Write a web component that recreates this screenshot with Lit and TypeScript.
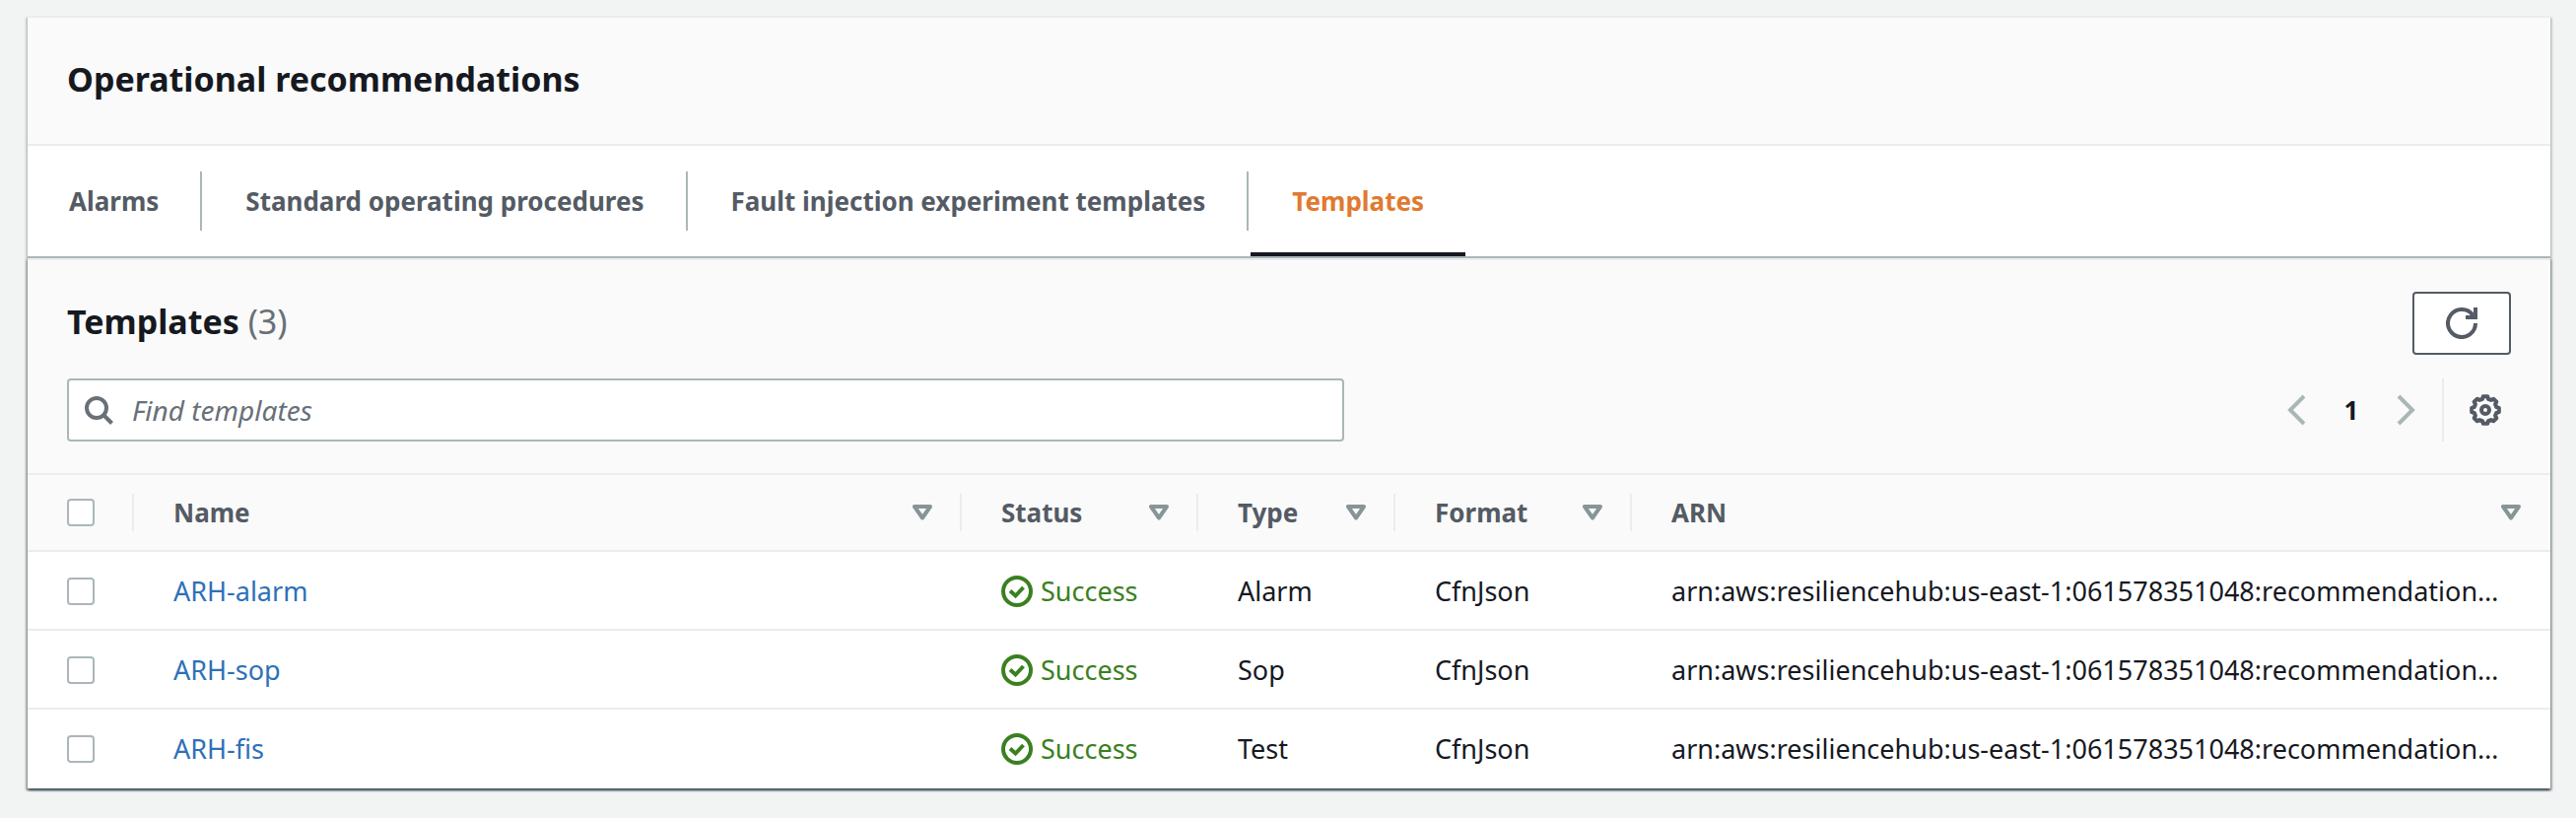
import { LitElement, html, css, svg, nothing } from "lit";
import { customElement, state } from "lit/decorators.js";
import { classMap } from "lit/directives/class-map.js";

interface Template {
  name: string;
  status: string;
  type: string;
  format: string;
  arn: string;
}

const ARN = "arn:aws:resiliencehub:us-east-1:061578351048:recommendation…";

const TEMPLATES: Template[] = [
  { name: "ARH-alarm", status: "Success", type: "Alarm", format: "CfnJson", arn: ARN },
  { name: "ARH-sop", status: "Success", type: "Sop", format: "CfnJson", arn: ARN },
  { name: "ARH-fis", status: "Success", type: "Test", format: "CfnJson", arn: ARN },
];

const TABS = ["Alarms", "Standard operating procedures", "Fault injection experiment templates", "Templates"];

const COLUMNS = [
  { label: "Name", width: "name" },
  { label: "Status", width: "status" },
  { label: "Type", width: "type" },
  { label: "Format", width: "format" },
  { label: "ARN", width: "arn" },
];

// Outline of an eight-toothed gear centred in a 32 unit box.
const gearPath = (() => {
  const at = (deg: number, r: number) => {
    const a = (deg * Math.PI) / 180;
    return `${(16 + r * Math.cos(a)).toFixed(2)} ${(16 + r * Math.sin(a)).toFixed(2)}`;
  };
  const points: string[] = [];
  for (let i = 0; i < 8; i++) {
    const a = i * 45;
    points.push(at(a - 9, 14), at(a + 9, 14), at(a + 15, 11.6), at(a + 30, 11.6));
  }
  return `M${points.join("L")}Z`;
})();

const icon = (w: number, h: number, body: unknown) =>
  html`<svg class="icon" width=${w} height=${h} viewBox="0 0 ${w} ${h}" fill="none" stroke="currentColor" stroke-width="4" aria-hidden="true">${body}</svg>`;

const searchIcon = icon(32, 32, svg`<circle cx="14" cy="14" r="10"/><path d="M21 21l8.5 8.5"/>`);
const refreshIcon = icon(32, 32, svg`<path d="M30 16A14 14 0 1 1 27.5 8"/><path d="M30 0v10H20"/>`);
const gearIcon = icon(32, 32, svg`<path d=${gearPath} stroke-linejoin="round"/><circle cx="16" cy="16" r="4"/>`);
const prevIcon = icon(20, 32, svg`<path d="M18 2L4 16l14 14"/>`);
const nextIcon = icon(20, 32, svg`<path d="M2 2l14 14L2 30"/>`);
const sortIcon = icon(20, 16, svg`<path d="M2 2h16l-8 11.5z" stroke-linejoin="round"/>`);
const successIcon = icon(32, 32, svg`<circle cx="16" cy="16" r="14"/><path d="M9 15.5l5.5 5L22.5 12"/>`);

@customElement("app-root")
export class AppRoot extends LitElement {
  static styles = css`
    :host {
      display: block;
      box-sizing: border-box;
      min-height: 100vh;
      padding: 16px 26px 28px 28px;
      background: #f2f3f3;
      color: #16191f;
      font-family: "Noto Sans", "Open Sans", sans-serif;
      font-size: 27px;
      line-height: 44px;
    }
    *, *::before, *::after { box-sizing: border-box; }
    button, input { font: inherit; color: inherit; margin: 0; }
    button { padding: 0; border: 0; background: none; cursor: pointer; }
    .icon { display: block; flex: none; }
    .container {
      background: #fff;
      border-top: 2px solid #eaeded;
      box-shadow: 0 2px 2px 0 rgba(0, 28, 36, 0.3), 2px 2px 2px 0 rgba(0, 28, 36, 0.15), -2px 2px 2px 0 rgba(0, 28, 36, 0.15);
    }
    .header { padding: 40px 40px 44px; background: #fafafa; border-bottom: 2px solid #eaeded; }
    h1, h2 { margin: 0; font-size: 34px; font-weight: 700; }
    h2 { padding-bottom: 4px; }
    .count { font-weight: 400; color: #687078; }
    .tabs { display: flex; gap: 2px; border-bottom: 2px solid #aab7b8; }
    .tab-item { display: flex; align-items: center; }
    .tab-item:not(:last-child)::after { content: ""; width: 2px; height: 60px; background: #aab7b8; }
    .tab {
      height: 112px;
      padding: 0 42px;
      border-top: 4px solid transparent;
      border-bottom: 4px solid transparent;
      font-size: 26px;
      font-weight: 700;
      color: #545b64;
    }
    .tab.active { color: #e07a30; border-bottom-color: #16191f; }
    .table-tools { display: grid; gap: 24px; padding: 32px 40px; background: #fafafa; }
    .tool-row { display: flex; align-items: center; justify-content: space-between; gap: 40px; }
    .refresh {
      display: grid;
      place-items: center;
      width: 100px;
      height: 64px;
      border: 2px solid #545b64;
      border-radius: 4px;
      background: #fff;
      color: #545b64;
    }
    .search {
      display: flex;
      flex: 0 1 1296px;
      align-items: center;
      gap: 18px;
      min-width: 0;
      height: 64px;
      padding: 0 14px;
      border: 2px solid #aab7b8;
      border-radius: 4px;
      background: #fff;
      color: #687078;
    }
    .search-input { flex: 1; min-width: 0; padding: 0; border: 0; outline: 0; background: none; color: #16191f; font-size: 28px; }
    .search-input::placeholder { color: #687078; font-style: italic; opacity: 1; }
    .paging { display: flex; align-items: center; height: 64px; }
    .arrow { color: #aab7b8; }
    .page { width: 92px; font-size: 26px; font-weight: 700; text-align: center; }
    .settings {
      height: 64px;
      margin-left: 26px;
      padding: 0 10px 0 26px;
      border-left: 2px solid #eaeded;
      color: #545b64;
    }
    table { width: 100%; table-layout: fixed; border-collapse: separate; border-spacing: 0; border-top: 2px solid #eaeded; }
    .col-select { width: 108px; }
    .col-name { width: 840px; }
    .col-status, .col-format { width: 240px; }
    .col-type { width: 200px; }
    th { height: 78px; padding: 0; background: #fafafa; border-bottom: 2px solid #eaeded; font-weight: 400; }
    .head { display: flex; align-items: center; padding-left: 40px; }
    .head::after { content: ""; width: 2px; height: 38px; background: #eaeded; }
    .head.last::after { background: none; }
    .head.select { justify-content: space-between; }
    .sort {
      display: flex;
      flex: 1;
      align-items: center;
      justify-content: space-between;
      padding-right: 28px;
      font-size: 26px;
      font-weight: 700;
      color: #545b64;
    }
    .sort .icon { color: #879596; }
    td { height: 80px; padding: 0 40px; overflow: hidden; white-space: nowrap; text-overflow: ellipsis; }
    tbody tr:not(:last-child) td { box-shadow: inset 0 -2px #eaeded; }
    .check {
      display: block;
      appearance: none;
      width: 28px;
      height: 28px;
      border: 2px solid #aab7b8;
      border-radius: 4px;
      background: #fff;
    }
    .check:checked { background: #0073bb; border-color: #0073bb; }
    .name { color: #2e70b8; text-decoration: none; }
    .status { display: flex; align-items: center; gap: 8px; color: #3a8020; }
  `;

  @state() private tab = "Templates";
  @state() private query = "";
  @state() private selected = new Set<string>();

  private toggle(name: string) {
    const next = new Set(this.selected);
    next.has(name) ? next.delete(name) : next.add(name);
    this.selected = next;
  }

  private toggleAll() {
    this.selected = this.selected.size === TEMPLATES.length ? new Set() : new Set(TEMPLATES.map((t) => t.name));
  }

  private renderTabs() {
    return html`<div class="tabs" role="tablist">
      ${TABS.map((t) => html`<div class="tab-item" role="presentation">
        <button class=${classMap({ tab: true, active: t === this.tab })} role="tab"
          aria-selected=${t === this.tab ? "true" : "false"} @click=${() => (this.tab = t)}>${t}</button>
      </div>`)}
    </div>`;
  }

  private renderRow(t: Template) {
    return html`<tr>
      <td><input class="check" type="checkbox" aria-label="Select ${t.name}"
        .checked=${this.selected.has(t.name)} @change=${() => this.toggle(t.name)}></td>
      <td><a class="name" href="#${t.name}">${t.name}</a></td>
      <td><span class="status">${successIcon}${t.status}</span></td>
      <td>${t.type}</td>
      <td>${t.format}</td>
      <td>${t.arn}</td>
    </tr>`;
  }

  private renderTable() {
    const rows = TEMPLATES.filter((t) => t.name.toLowerCase().includes(this.query.toLowerCase()));
    return html`<section class="container" aria-labelledby="templates-title">
      <div class="table-tools">
        <div class="tool-row">
          <h2 id="templates-title">Templates <span class="count">(${TEMPLATES.length})</span></h2>
          <button class="refresh" aria-label="Refresh">${refreshIcon}</button>
        </div>
        <div class="tool-row">
          <label class="search">${searchIcon}
            <input class="search-input" type="text" placeholder="Find templates" aria-label="Find templates"
              @input=${(e: Event) => (this.query = (e.target as HTMLInputElement).value)}>
          </label>
          <div class="paging">
            <button class="arrow" aria-label="Previous page">${prevIcon}</button>
            <button class="page" aria-current="page">1</button>
            <button class="arrow" aria-label="Next page">${nextIcon}</button>
            <button class="settings" aria-label="Preferences">${gearIcon}</button>
          </div>
        </div>
      </div>
      <table>
        <colgroup>
          <col class="col-select">
          ${COLUMNS.map((c) => html`<col class="col-${c.width}">`)}
        </colgroup>
        <thead>
          <tr>
            <th scope="col"><div class="head select">
              <input class="check" type="checkbox" aria-label="Select all templates"
                .checked=${this.selected.size === TEMPLATES.length} @change=${this.toggleAll}>
            </div></th>
            ${COLUMNS.map((c, i) => html`<th scope="col">
              <div class=${classMap({ head: true, last: i === COLUMNS.length - 1 })}>
                <button class="sort">${c.label}${sortIcon}</button>
              </div>
            </th>`)}
          </tr>
        </thead>
        <tbody>${rows.map((t) => this.renderRow(t))}</tbody>
      </table>
    </section>`;
  }

  render() {
    return html`<main class="container">
      <div class="header"><h1>Operational recommendations</h1></div>
      ${this.renderTabs()}
      ${this.tab === "Templates" ? this.renderTable() : nothing}
    </main>`;
  }
}
